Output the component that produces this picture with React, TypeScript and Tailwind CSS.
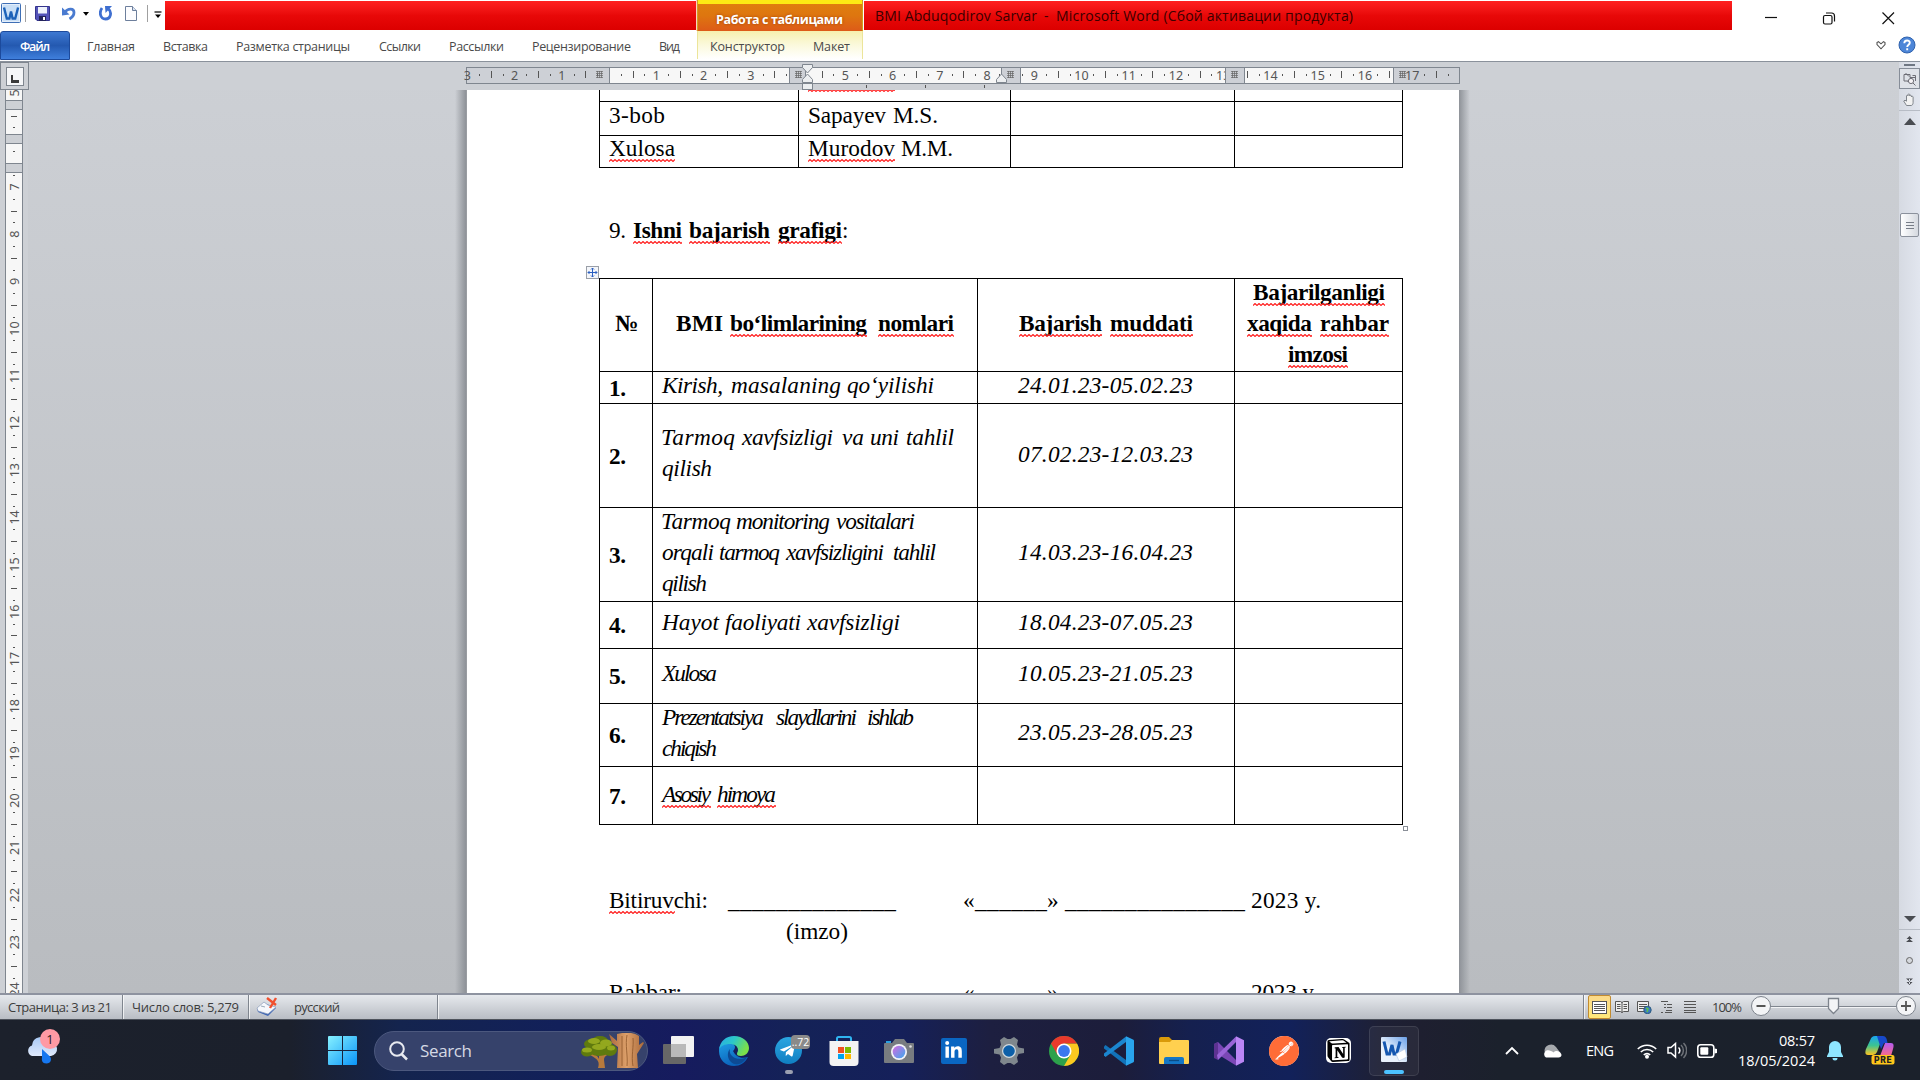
import React, { useLayoutEffect, useRef, useState } from "react";
import { FaLinkedinIn, FaTelegramPlane } from "react-icons/fa";
import { SiNotion, SiPostman } from "react-icons/si";

/* Text whose tracking is adjusted so that it spans a given width. */
function Fit({ text, w, className = "" }: { text: string; w: number; className?: string }) {
  const ref = useRef<HTMLSpanElement>(null);
  const [gap, setGap] = useState(0);
  useLayoutEffect(() => {
    if (!ref.current || text.length < 2) return;
    const natural = ref.current.getBoundingClientRect().width - gap * text.length;
    setGap((w - natural) / (text.length - 1));
  }, [text, w]);
  return (
    <span className={`block shrink-0 whitespace-pre ${className}`} style={{ width: w }}>
      <span ref={ref} style={{ letterSpacing: gap }}>
        {text}
      </span>
    </span>
  );
}

function Squiggle({ w }: { w: number }) {
  let d = "M0 2.5";
  for (let x = 2, up = true; x <= w + 1; x += 2, up = !up) d += `L${x} ${up ? 0.5 : 2.5}`;
  return (
    <svg className="absolute left-0 top-[26px]" width={w} height="3">
      <path d={d} fill="none" stroke="#ff2222" strokeWidth="1.150" />
    </svg>
  );
}

/* [text, left, right, misspelled?, light?] with coordinates along the page line */
type Word = [string, number, number, number?, number?];

function Line({ words, from, className = "" }: { words: Word[]; from: number; className?: string }) {
  return (
    <div className={`flex h-[31px] leading-[31px] ${className}`}>
      {words.map(([t, a, b, sq, light], i) => (
        <div key={i} className="relative shrink-0" style={{ marginLeft: a - (i ? words[i - 1][2] : from) }}>
          <Fit text={t} w={b - a} className={light ? "font-normal" : ""} />
          {sq ? <Squiggle w={b - a} /> : null}
        </div>
      ))}
    </div>
  );
}

type CellData = { top: number; lines: Word[][]; cls?: string };

const empty: CellData = { top: 0, lines: [] };
const cols = [599, 652, 977, 1234];
const num = (n: string, top: number): CellData => ({ top, cls: "font-bold", lines: [[[n, 609, 626]]] });
const date = (t: string, top: number): CellData => ({ top, cls: "italic", lines: [[[t, 1018, 1193]]] });
const it = (top: number, lines: Word[][]): CellData => ({ top, cls: "italic", lines });

const rows: { h: string; cells: CellData[] }[] = [
  {
    h: "h-[93px]",
    cells: [
      { top: 29, cls: "font-bold", lines: [[["№", 615, 638]]] },
      { top: 29, cls: "font-bold", lines: [[["BMI", 676, 723], ["bo‘limlarining", 730, 867, 1], ["nomlari", 878, 954, 1]]] },
      { top: 29, cls: "font-bold", lines: [[["Bajarish", 1019, 1102, 1], ["muddati", 1110, 1193, 1]]] },
      {
        top: -2,
        cls: "font-bold",
        lines: [[["Bajarilganligi", 1253, 1385, 1]], [["xaqida", 1247, 1312, 1], ["rahbar", 1320, 1389, 1]], [["imzosi", 1288, 1348, 1]]],
      },
    ],
  },
  {
    h: "h-[32px]",
    cells: [num("1.", 1), it(-2, [[["Kirish,", 662, 723], ["masalaning", 731, 841], ["qo‘yilishi", 847, 934]]]), date("24.01.23-05.02.23", -2), empty],
  },
  {
    h: "h-[104px]",
    cells: [
      num("2.", 37),
      it(18, [[["Tarmoq", 661, 735], ["xavfsizligi", 742, 833], ["va", 842, 864], ["uni", 870, 899], ["tahlil", 906, 954]], [["qilish", 662, 712]]]),
      date("07.02.23-12.03.23", 35),
      empty,
    ],
  },
  {
    h: "h-[94px]",
    cells: [
      num("3.", 32),
      it(-2, [
        [["Tarmoq", 661, 731], ["monitoring", 736, 830], ["vositalari", 836, 915]],
        [["orqali", 662, 714], ["tarmoq", 719, 780], ["xavfsizligini", 786, 884], ["tahlil", 893, 936]],
        [["qilish", 662, 707]],
      ]),
      date("14.03.23-16.04.23", 29),
      empty,
    ],
  },
  {
    h: "h-[47px]",
    cells: [num("4.", 8), it(5, [[["Hayot", 662, 719], ["faoliyati", 725, 801], ["xavfsizligi", 807, 900]]]), date("18.04.23-07.05.23", 5), empty],
  },
  { h: "h-[55px]", cells: [num("5.", 12), it(9, [[["Xulosa", 662, 717]]]), date("10.05.23-21.05.23", 9), empty] },
  {
    h: "h-[63px]",
    cells: [
      num("6.", 16),
      it(-2, [[["Prezentatsiya", 662, 764], ["slaydlarini", 776, 857], ["ishlab", 867, 914]], [["chiqish", 662, 717]]]),
      date("23.05.23-28.05.23", 13),
      empty,
    ],
  },
  { h: "h-[59px]", cells: [num("7.", 14), it(12, [[["Asosiy", 662, 711, 1], ["himoya", 717, 776, 1]]]), empty, empty] },
];

function DataCell({ c, x }: { c: CellData; x: number }) {
  return (
    <div className={`min-w-0 border-l border-t border-black ${c.cls ?? ""}`}>
      <div style={{ marginTop: c.top }} className="flex flex-col">
        {c.lines.map((l, i) => (
          <Line key={i} words={l} from={x + 1} />
        ))}
      </div>
    </div>
  );
}

const topCols = [599, 798, 1010, 1234];
const topRows: { h: string; top: number; a: Word[]; b: Word[] }[] = [
  { h: "h-[34px]", top: -2, a: [["3-bob", 609, 665]], b: [["Sapayev", 808, 886], ["M.S.", 893, 938]] },
  { h: "h-[33px] border-b", top: -3, a: [["Xulosa", 609, 675, 1]], b: [["Murodov", 808, 895, 1], ["M.M.", 901, 953]] },
];

function Page() {
  return (
    <div className="relative w-[992px] shrink-0 overflow-hidden bg-white text-[23.3px] text-black [font-family:'Liberation_Serif',serif]">
      <div className="ml-[132px] w-[804px]">
        <div className="grid h-[11px] grid-cols-[199px_212px_224px_169px] border-r border-black">
          {topCols.map((x) => (
            <div key={x} className="relative border-l border-black">
              {x === 798 && (
                <div className="absolute -top-[27px] left-[9px]">
                  <Squiggle w={87} />
                </div>
              )}
            </div>
          ))}
        </div>
        {topRows.map((r, i) => (
          <div key={i} className={`grid grid-cols-[199px_212px_224px_169px] border-r border-black ${r.h}`}>
            <DataCell x={599} c={{ top: r.top, lines: [r.a] }} />
            <DataCell x={798} c={{ top: r.top, lines: [r.b] }} />
            <DataCell x={1010} c={empty} />
            <DataCell x={1234} c={empty} />
          </div>
        ))}
        <Line
          className="mt-[47px] font-bold"
          from={599}
          words={[["9.", 609, 626, 0, 1], ["Ishni", 633, 682, 1], ["bajarish", 689, 770, 1], ["grafigi", 778, 842, 1], [":", 842, 850, 0, 1]]}
        />
        <div className="relative mt-[32px]">
          <svg className="absolute -left-[13px] -top-[12px]" width="13" height="13" viewBox="0 0 13 13">
            <rect x=".5" y=".5" width="12" height="12" fill="#f4f6fa" stroke="#9a9fa8" />
            <path d="M6.5 2v9M2 6.5h9M5 3.5l1.5-1.5L8 3.500M5 9.500L6.500 11 8 9.500M3.500 5L2 6.500 3.500 8M9.500 5L11 6.500 9.500 8" fill="none" stroke="#2b5fc0" />
          </svg>
          {rows.map((r, i) => (
            <div
              key={i}
              className={`grid grid-cols-[53px_325px_257px_169px] border-r border-black ${r.h} ${i === rows.length - 1 ? "border-b" : ""}`}
            >
              {r.cells.map((c, j) => (
                <DataCell key={j} x={cols[j]} c={c} />
              ))}
            </div>
          ))}
          <div className="absolute -bottom-[6px] -right-[5px] size-[5px] border border-[#8a8f98] bg-white" />
        </div>
        <div className="mt-[60px]">
          <div className="relative">
            <Line
              from={599}
              words={[
                ["Bitiruvchi:", 609, 708],
                ["______________", 728, 896],
                ["«", 963, 975],
                ["______", 975, 1047],
                ["»", 1047, 1059],
                ["_______________", 1065, 1245],
                ["2023 y.", 1251, 1321],
              ]}
            />
            <div className="absolute left-[10px] top-0">
              <Squiggle w={66} />
            </div>
          </div>
          <Line from={599} words={[["(imzo)", 786, 848]]} />
          <Line
            className="mt-[30px]"
            from={599}
            words={[["Rahbar:", 609, 682], ["«", 963, 976], ["»", 1047, 1059], ["2023 y.", 1251, 1318]]}
          />
        </div>
      </div>
    </div>
  );
}

function HRuler() {
  const t: React.ReactNode[] = [];
  const CM = 47.25;
  for (let q = -12; q <= 71; q++) {
    const x = 143 + (q * CM) / 4;
    const n = Math.abs(q / 4);
    const hidden = [[322, 348], [534, 553], [758, 777], [-9, -2], [927, 940]].some(([a, b]) => x > a && x < b);
    if (q % 4 === 0) {
      if (n !== 0 && n !== 4)
        t.push(
          <text key={q} x={x} y="17.500" textAnchor="middle" fontSize="12.500" fill="#555" fontFamily="'Noto Sans',sans-serif">
            {n}
          </text>,
        );
    } else if (!hidden && x > 4 && x < 990)
      t.push(
        q % 2 === 0 ? (
          <rect key={q} x={Math.round(x)} y="9" width="1" height="7" fill="#555" />
        ) : (
          <rect key={q} x={Math.round(x)} y="12" width="1" height="2" fill="#555" />
        ),
      );
  }
  const grid = (x: number) => (
    <path key={"g" + x} d={`M${x} 9.500h7M${x} 11.500h7M${x} 13.500h7M${x} 15.500h7M${x + 1.5} 9v7M${x + 3.5} 9v7M${x + 5.5} 9v7`} stroke="#666" strokeWidth=".7" />
  );
  return (
    <svg className="block overflow-visible" width="994" height="28" viewBox="0 0 994 28">
      <rect x=".5" y="5.500" width="993" height="16" fill="#cdd0d6" stroke="#7f868f" />
      <rect x="143" y="6" width="784" height="15" fill="#f7f7f7" />
      <path d="M143.500 5v16M927.500 5v16" stroke="#7f868f" />
      {t}
      {[[323, 16], [535, 19], [759, 19]].map(([x, w]) => (
        <rect key={x} x={x + 0.5} y="5.500" width={w} height="16" fill="#cdd0d6" stroke="#7f868f" />
      ))}
      {[130, 329, 541, 765, 933].map(grid)}
      <g stroke="#7f868f" fill="#eceef0">
        <path d="M336.500 2.500h10v3l-5 5.500-5-5.500z" />
        <path d="M336.500 20.500v-3l5-5.500 5 5.500v3z" />
        <rect x="336.500" y="21.500" width="10" height="6" />
        <path d="M530.500 20.500v-3l5-5.500 5 5.500v3z" />
      </g>
      <path d="M400.500 23v3M459.500 23v3M518.500 23v3" stroke="#555" />
    </svg>
  );
}

function VRuler() {
  const t: React.ReactNode[] = [];
  for (let q = 27; q <= 96; q++) {
    const y = 97 + ((q - 28) * 47.2) / 4;
    if (q % 4 === 0)
      t.push(
        <text key={q} transform={`translate(14 ${y}) rotate(-90)`} y="4.500" textAnchor="middle" fontSize="12.500" fill="#555" fontFamily="'Noto Sans',sans-serif">
          {q / 4}
        </text>,
      );
    else if (q % 2 === 0) t.push(<rect key={q} x="11" y={Math.round(y)} width="6" height="1" fill="#555" />);
    else t.push(<rect key={q} x="13" y={Math.round(y)} width="2" height="1" fill="#555" />);
  }
  return (
    <svg className="block w-[28px] shrink-0 bg-[#cdd0d5]" width="28" height="903" viewBox="0 0 28 903">
      <rect x="5.500" y="-2" width="17" height="910" fill="#f7f7f7" stroke="#7f868f" />
      <text transform="translate(14 3) rotate(-90)" y="4.500" textAnchor="middle" fontSize="12.500" fill="#555" fontFamily="'Noto Sans',sans-serif">
        5
      </text>
      {[10, 44, 73].map((y) => (
        <rect key={y} x="5.500" y={y + 0.5} width="17" height="9" fill="#cdd0d5" stroke="#7f868f" />
      ))}
      <path d="M11 26.500h6M13 37.500h2M13 61.500h2" stroke="#555" />
      {t}
    </svg>
  );
}

function WordGlyph() {
  return (
    <svg width="20" height="20" viewBox="0 0 20 20">
      <rect x=".5" y=".5" width="19" height="19" rx="1" fill="#e3eefb" stroke="#3f6fb5" />
      <rect x="2" y="2" width="16" height="16" fill="#c9dff6" />
      <path d="M3 4.500l2.800 11h2.600L10 8.500l1.600 7h2.600l2.900-11" fill="none" stroke="#1c62b9" strokeWidth="2.400" />
    </svg>
  );
}

function TitleBar() {
  return (
    <div className="flex h-[31px] bg-white">
      <div className="flex w-[165px] shrink-0 items-start pt-[3px] pl-px">
        <WordGlyph />
        <div className="ml-1 mt-0.5 h-[17px] w-px bg-[#a0a0a0]" />
        <svg className="ml-[9px] mt-[3px]" width="15" height="15" viewBox="0 0 15 15">
          <path d="M.5.500h14v14H2L.5 13z" fill="#5353b8" stroke="#34348c" />
          <rect x="3" y="1" width="9" height="6.500" fill="#eef2fb" />
          <rect x="4" y="10" width="7" height="5" fill="#23235c" />
          <rect x="8" y="11" width="2" height="3" fill="#fff" />
        </svg>
        <svg className="ml-[12px] mt-[3px]" width="14" height="15" viewBox="0 0 14 15">
          <path d="M3 6c3-4 9-4 9 .5 0 3-2 5-4.500 6.500" fill="none" stroke="#4a7bd0" strokeWidth="2.800" />
          <path d="M0 1.500v8l7.500-1z" fill="#4a7bd0" />
        </svg>
        <svg className="ml-[7px] mt-[9px]" width="6" height="4" viewBox="0 0 6 4">
          <path d="M0 0h6L3 3.800z" fill="#000" />
        </svg>
        <svg className="ml-[10px] mt-[2px]" width="14" height="16" viewBox="0 0 14 16">
          <path d="M3 3C0 7 1 14 6.500 14S13 7 9.500 4" fill="none" stroke="#3f6fd0" strokeWidth="2.800" />
          <path d="M6 1h7L6.500 8z" fill="#3f6fd0" />
        </svg>
        <svg className="ml-[12px] mt-[3px]" width="12" height="15" viewBox="0 0 12 15">
          <path d="M.5.500h7l4 4v10H.5z" fill="#fdfdff" stroke="#6d7f9c" />
          <path d="M7.500.500v4h4" fill="#dbe5f4" stroke="#6d7f9c" />
        </svg>
        <div className="ml-[10px] mt-0.5 h-[17px] w-px bg-[#a0a0a0]" />
        <svg className="ml-[6px] mt-[8px]" width="8" height="8" viewBox="0 0 8 8">
          <path d="M.5 1h7" stroke="#000" strokeWidth="1.200" />
          <path d="M1 3.500h6L4 7z" />
        </svg>
      </div>
      <div className="mt-px h-[29px] w-[531px] shrink-0 bg-gradient-to-b from-[#ff2020] via-[#e80808] to-[#dc0000]" />
      <div className="ml-px flex h-[31px] w-[166px] shrink-0 flex-col border-x border-[#d0a020] bg-gradient-to-b from-[#e0800e] via-[#de760f] to-[#dd5a18] shadow-[-1px_0_0_#ffd0c0]">
        <div className="h-[4px] shrink-0 bg-[#fdea14]" />
        <Fit text="Работа с таблицами" w={127} className="ml-[18px] mt-[6px] text-[12.500px] leading-[20px] font-bold text-white [text-shadow:0_0_3px_#a04000]" />
      </div>
      <div className="mt-px ml-px flex h-[29px] w-[868px] shrink-0 bg-gradient-to-b from-[#ff2020] via-[#e80808] to-[#dc0000] text-[14px] leading-[29px] text-[#3a0000]">
        <Fit text="BMI Abduqodirov Sarvar" w={162} className="ml-[11px]" />
        <span className="ml-[7px] w-[5px]">-</span>
        <Fit text="Microsoft Word (Сбой активации продукта)" w={297} className="ml-[7px]" />
      </div>
      <div className="flex grow items-start pl-[33px] pt-[11px]">
        <svg width="130" height="14" viewBox="0 0 130 14" fill="none" stroke="#111" strokeWidth="1.200">
          <path d="M0 6.500h12" />
          <rect x="58.500" y="4.500" width="8.500" height="8.500" rx="1.500" />
          <path d="M61 2h5.500a3 3 0 0 1 3 3v5.500" />
          <path d="M117.500 1.500l11.500 11.500M129 1.500L117.500 13" />
        </svg>
      </div>
    </div>
  );
}

const tabs: [string, number, number][] = [
  ["Главная", 87, 135],
  ["Вставка", 163, 208],
  ["Разметка страницы", 236, 350],
  ["Ссылки", 379, 421],
  ["Рассылки", 449, 504],
  ["Рецензирование", 532, 631],
  ["Вид", 659, 680],
];

function TabRow() {
  return (
    <div className="flex h-[31px] border-b border-[#8a919b] bg-white text-[12.500px] leading-[31px] text-[#4a4a4a]">
      <div className="h-[29px] w-[70px] shrink-0 rounded-t-[3px] border border-[#1c4a9c] bg-gradient-to-b from-[#3d78d2] via-[#2459b0] to-[#3f7fdc] text-white">
        <Fit text="Файл" w={30} className="ml-[19px] leading-[30px] font-semibold" />
      </div>
      {tabs.map(([t, a, b], i) => (
        <div key={t} className="shrink-0" style={{ marginLeft: a - (i ? tabs[i - 1][2] : 70) }}>
          <Fit text={t} w={b - a} />
        </div>
      ))}
      <div className="ml-[17px] flex h-[28px] w-[166px] shrink-0 border-x border-[#ece59a] bg-gradient-to-b from-[#f6f0ae] via-[#fbf9dc] to-white">
        <Fit text="Конструктор" w={75} className="ml-[12px]" />
        <Fit text="Макет" w={37} className="ml-[28px]" />
      </div>
      <div className="flex grow justify-end pr-[4px]">
        <svg className="mt-[10px]" width="10" height="9" viewBox="0 0 10 9" fill="none" stroke="#555" strokeWidth="1.100">
          <path d="M1 1.500l1.500-.8L5 2.800 7.500.700 9 1.500v2L5 7.800 1 3.500z" />
        </svg>
        <svg className="ml-[12px] mt-[5px]" width="18" height="18" viewBox="0 0 18 18">
          <circle cx="9" cy="9" r="8" fill="#4d86d8" stroke="#2f62ad" />
          <path d="M6.300 7.200c0-3.600 5.500-3.600 5.500-.4 0 2-2.600 2-2.600 4.200M9.200 12.300v1.900" fill="none" stroke="#fff" strokeWidth="1.900" />
        </svg>
      </div>
    </div>
  );
}

function ScrollBar() {
  return (
    <div className="flex w-[21px] shrink-0 flex-col items-center bg-gradient-to-r from-[#d6dae2] to-[#e2e6ef]">
      <div className="mt-[2px] h-[2px] w-[11px] bg-[#6f7783]" />
      <div className="mt-[2px] flex h-[21px] w-[21px] items-center justify-center border border-[#868d98] bg-[#dfe2e8]">
        <svg width="14" height="14" viewBox="0 0 14 14" fill="#f6f3f6" stroke="#6d6d75">
          <path d="M1 2.500h6v3h5.500V9M1 2.500V9h4M9.500 3.500h3V6M5 9v1" fill="none" />
          <circle cx="8" cy="9" r="2.600" />
          <path d="M10 11l2.500 2.500M2.500 1l3.500 3.500" />
        </svg>
      </div>
      <svg className="mt-[4px]" width="13" height="14" viewBox="0 0 13 14" fill="#f2f2f2" stroke="#80858c">
        <path d="M3.500 12.500L.7 8l1.300-.8 1.500 1V3c0-1 1.500-1 1.500 0V1.700c0-1 1.700-1 1.700 0V3c0-1 1.700-1 1.700 0v1c0-1 1.700-1 1.700 0v5.500c0 2-1 3-2 3z" />
      </svg>
      <div className="mt-[3px] h-px w-full bg-[#b7bcc5]" />
      <svg className="mt-[7px]" width="12" height="7">
        <path d="M6 0l6 7H0z" fill="#4a4d52" />
      </svg>
      <div className="mt-[88px] flex h-[24px] w-[19px] flex-col items-center justify-center gap-[2px] rounded-[2px] border border-[#8b919c] bg-gradient-to-r from-white to-[#d5d9e0]">
        <div className="h-px w-[8px] bg-[#777d88]" />
        <div className="h-px w-[8px] bg-[#777d88]" />
        <div className="h-px w-[8px] bg-[#777d88]" />
      </div>
      <svg className="mt-auto" width="12" height="6">
        <path d="M0 0h12L6 6z" fill="#4a4d52" />
      </svg>
      <div className="mt-[7px] h-px w-full bg-[#b7bcc5]" />
      <svg className="mb-[6px] mt-[5px]" width="9" height="52" viewBox="0 0 9 52" fill="#4a4d52">
        <path d="M4.500 1l3 3h-6zM4.500 4l3.500 3H1zM4 3h1v4H4zM4.500 50l3-3h-6zM4.500 46.500L8 43.500H1zM4 43h1v6H4z" />
        <circle cx="4.500" cy="25.500" r="3" fill="#d5d8dd" stroke="#666" />
      </svg>
    </div>
  );
}

function StatusBar() {
  const sep = "h-[24px] w-[2px] shrink-0 border-l border-[#7f858e] bg-white/70";
  return (
    <div className="flex h-[27px] items-center border-b border-t-2 border-b-[#4e535c] border-t-[#8e93a0] bg-gradient-to-b from-[#e6e9ed] to-[#b9bdc4] text-[13px] leading-[24px] text-[#3d3d3d]">
      <Fit text="Страница: 3 из 21" w={104} className="ml-[8px]" />
      <div className={`ml-[10px] ${sep}`} />
      <Fit text="Число слов: 5,279" w={107} className="ml-[8px]" />
      <div className={`ml-[9px] ${sep}`} />
      <svg className="ml-[6px]" width="22" height="20" viewBox="0 0 22 20">
        <path d="M1 12l7-6 5 2 7 3-8 8L2 15z" fill="#3f66b4" />
        <path d="M1 11l7-6 4 3 8 2-8 7-10-3z" fill="#f6f8fc" stroke="#8d9dbb" strokeWidth=".7" />
        <path d="M11 1l9 7M20 1l-6 10" stroke="#f0502f" strokeWidth="2.400" />
        <path d="M5 9l4 1" stroke="#9ab" />
      </svg>
      <Fit text="русский" w={46} className="ml-[16px]" />
      <div className={`ml-[97px] ${sep}`} />
      <div className={`ml-auto ${sep}`} />
      <div className="ml-[3px] flex h-[24px] w-[23px] shrink-0 items-center justify-center rounded-[2px] border border-[#c28b30] bg-gradient-to-b from-[#fbd98a] to-[#ffe97a]">
        <svg width="15" height="13" viewBox="0 0 15 13" fill="#fff" stroke="#555">
          <rect x=".5" y=".5" width="14" height="12" />
          <path d="M2 3.500h11M2 5.500h11M2 7.500h11M2 9.500h11" />
        </svg>
      </div>
      <svg className="ml-[4px] shrink-0" width="82" height="14" viewBox="0 0 82 14" fill="none" stroke="#555">
        <path d="M.5 1.500h5l1.500 1 1.500-1h5v10h-5L7 12.500l-1.500-1h-5zM7 2v11M2 4.500h3.500M2 6.500h3.500M2 8.500h3.500M8.500 4.500H12M8.500 6.500H12M8.500 8.500H12" fill="#eee" />
        <path d="M22.500 1.500h11v10h-11zM24 4.500h8M24 6.500h8M24 8.500h5" fill="#eee" />
        <circle cx="32.500" cy="10" r="3.700" fill="#3a78c0" stroke="#2b5a7f" />
        <path d="M31 8l2 1-1 3" stroke="#5dc04a" strokeWidth="1.500" />
        <path d="M46 1.500h7M49 4.500h2M52 4.500h5M49 7.500h2M52 7.500h5M46 12.500h2M51 10.500h6M50 12.500h7" />
        <path d="M69 1.500h12M69 4.500h12M69 7.500h12M69 10.500h12M69 12.500h12" />
      </svg>
      <Fit text="100%" w={30} className="ml-[15px]" />
      <svg className="ml-[8px] mr-[3px] shrink-0" width="167" height="24" viewBox="0 0 167 24">
        <path d="M20 11.500h126" stroke="#80868f" />
        <path d="M20 12.500h126" stroke="#f2f3f5" />
        <g fill="#f3f4f6" stroke="#7d838c">
          <circle cx="11" cy="11" r="9.500" />
          <circle cx="156" cy="11" r="9.500" />
          <path d="M78.500 3.500h10v10l-5 5-5-5z" strokeWidth="1.300" />
        </g>
        <path d="M6.500 11h9M151 11h10M156 6v10" stroke="#555" strokeWidth="1.800" />
      </svg>
    </div>
  );
}

function Slot({ children }: { children: React.ReactNode }) {
  return <div className="relative flex h-full w-[55px] shrink-0 items-center justify-center">{children}</div>;
}

function Taskbar() {
  return (
    <div className="h-[60px] overflow-hidden bg-[linear-gradient(90deg,#1c212c_0px,#1b202c_290px,#14244e_400px,#12205a_560px,#161b5e_680px,#142257_800px,#15205a_900px,#1d1f40_990px,#1c1d3a_1120px,#15204f_1190px,#12215a_1290px,#1e2035_1380px,#1e1f30_1420px,#1b212c_1500px,#1b212b_1920px)] pt-px">
      <div className="flex h-[59px] items-center">
        <div className="relative ml-[26px] h-[59px] w-[40px] shrink-0">
          <svg className="absolute left-0 top-[11px]" width="36" height="34" viewBox="0 0 36 34">
            <defs>
              <linearGradient id="wc" x1="0" y1="0" x2="0" y2="1">
                <stop offset="0" stopColor="#a9c9f5" />
                <stop offset="1" stopColor="#dfe9fb" />
              </linearGradient>
            </defs>
            <path d="M6 24a5.500 5.500 0 0 1 0-10.500A9 9 0 0 1 23 10a7 7 0 0 1 2 14z" fill="url(#wc)" />
            <path d="M16 17l8 7.500c2 2.500 1 7-3.500 7s-5-3.500-4.500-6z" fill="#1677f0" />
          </svg>
          <div className="absolute left-[14px] top-[8px] flex size-[20px] items-center justify-center rounded-full bg-[#ff99a4] text-[13px] leading-none text-[#2a1a1c]">1</div>
        </div>
        <svg className="ml-[262px] shrink-0" width="30" height="30" viewBox="0 0 30 30">
          <defs>
            <linearGradient id="win" x1="0" y1="0" x2="1" y2="1">
              <stop offset="0" stopColor="#86f1ff" />
              <stop offset="1" stopColor="#0a94f8" />
            </linearGradient>
          </defs>
          <path d="M0 1a1 1 0 0 1 1-1h13v14H0zM15 0h13a1 1 0 0 1 1 1v13H15zM0 15h14v14H1a1 1 0 0 1-1-1zM15 15h14v13a1 1 0 0 1-1 1H15z" fill="url(#win)" />
        </svg>
        <div className="ml-[16px] flex h-[40px] w-[274px] shrink-0 items-center rounded-full border border-[#4c587e] bg-[#36426b]">
          <svg className="ml-[14px]" width="19" height="20" viewBox="0 0 19 20" fill="none" stroke="#e8eaf0" strokeWidth="2">
            <circle cx="8" cy="8" r="6.800" />
            <path d="M12.500 13l5.500 5.500" strokeWidth="2.500" />
          </svg>
          <Fit text="Search" w={52} className="ml-[12px] text-[17px] text-[#d5d9e4]" />
          <svg className="ml-[109px]" width="64" height="36" viewBox="0 0 64 36">
            <defs>
              <linearGradient id="trunk">
                <stop offset="0" stopColor="#a8683c" />
                <stop offset=".5" stopColor="#dda06a" />
                <stop offset="1" stopColor="#a9693a" />
              </linearGradient>
            </defs>
            <path d="M18 22h4c0-3 5-4 9-6l1 3c-4 3-9 3-9 8l1 8h-7c2-6 0-9-8-13l1-2c4 1 7 3 8 6z" fill="#b77a3c" />
            <g fill="#5f7a0e">
              <ellipse cx="6" cy="19" rx="6" ry="4.500" />
              <ellipse cx="11" cy="11" rx="8" ry="5" />
              <ellipse cx="19" cy="8" rx="8" ry="5" />
              <ellipse cx="18" cy="17" rx="11" ry="6" />
              <ellipse cx="29" cy="17" rx="7" ry="6" />
            </g>
            <g fill="#93a81e">
              <ellipse cx="13" cy="8" rx="6" ry="3" />
              <ellipse cx="25" cy="10" rx="6" ry="3.500" />
              <ellipse cx="6" cy="17" rx="5" ry="2.500" />
              <ellipse cx="18" cy="14" rx="7" ry="3" />
              <ellipse cx="30" cy="15" rx="4" ry="2.500" />
            </g>
            <path d="M28 1l8 7V1c8-2 16-2 22 2v9l4-3 1 1-7 11 1 14H36l1-21-6-4z" fill="url(#trunk)" />
            <path d="M41 3v30M46 2c-2 10 1 20 0 31M52 5c1 8-2 18 0 28" stroke="#8d5529" strokeWidth=".8" fill="none" />
          </svg>
        </div>
        <div className="ml-[3px] flex h-[59px] shrink-0">
          <Slot>
            <svg width="31" height="29" viewBox="0 0 31 29">
              <rect x="0" y="8" width="23" height="20" rx="1" fill="#676767" />
              <rect x="8" y="0" width="23" height="21" rx="1" fill="#f2f2f2" />
              <path d="M8 8h15v13H8z" fill="#b9b9b9" />
            </svg>
          </Slot>
          <Slot>
            <svg width="30" height="30" viewBox="0 0 30 30">
              <defs>
                <linearGradient id="eg" x1="0" y1="0" x2="1" y2=".4">
                  <stop offset="0" stopColor="#2aa9e8" />
                  <stop offset=".5" stopColor="#2cc8c8" />
                  <stop offset="1" stopColor="#7be04a" />
                </linearGradient>
                <linearGradient id="eb" x1="0" y1="0" x2=".5" y2="1">
                  <stop offset="0" stopColor="#1fa0e6" />
                  <stop offset="1" stopColor="#0a5fb8" />
                </linearGradient>
              </defs>
              <path d="M0 15C0 6 7 5 12 7c6 2 4 6 2 8 3 6 8 8 15 6-3 6-8 9-14 9C7 30 0 24 0 15z" fill="url(#eb)" />
              <path d="M0 14C1 5 7 0 15 0c9 0 15 6 15 12 0 5-4 8-8 8-3 0-4-1-4-2 0-2 1-2 1-4 0-4-4-6-8-6C6 8 1 10 0 14z" fill="url(#eg)" />
              <path d="M11 13c-3 3-3 9 1 13 3 3 8 3 12 0 1-1 3-3 4-5-3 2-8 3-12 1-4-2-6-5-5-9z" fill="#0d4a94" />
            </svg>
          </Slot>
          <Slot>
            <div className="flex size-[27px] items-center justify-center rounded-full bg-gradient-to-b from-[#2ba6e1] to-[#0f7fc2]">
              <FaTelegramPlane className="mr-[2px] size-[17px] text-white" />
            </div>
            <div className="absolute left-[30px] top-[14px] flex h-[14px] w-[19px] items-center justify-center rounded-[4px] bg-[#8a8a8a] text-[10.500px] leading-none text-white">..72</div>
            <div className="absolute left-[24px] top-[49px] h-[4px] w-[8px] rounded-full bg-[#9a9fb0]" />
          </Slot>
          <Slot>
            <svg width="30" height="30" viewBox="0 0 30 30">
              <path d="M8 6V2.500A1.500 1.500 0 0 1 9.500 1h11A1.500 1.500 0 0 1 22 2.500V6" fill="none" stroke="#2fb4f0" strokeWidth="2" />
              <path d="M.5 5h29v21a4 4 0 0 1-4 4h-21a4 4 0 0 1-4-4z" fill="#f3f3f3" />
              <path d="M9 11h6v6H9z" fill="#f25022" />
              <path d="M16 11h6v6h-6z" fill="#7fba00" />
              <path d="M9 18h6v5H9z" fill="#00a4ef" />
              <path d="M16 18h6v5h-6z" fill="#ffb900" />
            </svg>
          </Slot>
          <Slot>
            <svg width="30" height="24" viewBox="0 0 30 24">
              <defs>
                <linearGradient id="cam" x1="0" y1="0" x2="1" y2="1">
                  <stop offset="0" stopColor="#d66ae0" />
                  <stop offset="1" stopColor="#3ca9ee" />
                </linearGradient>
              </defs>
              <rect x="2" y="2" width="5" height="4" fill="#2aa0e0" />
              <path d="M0 5a1 1 0 0 1 1-1h7l3-4h9l3 4h6a1 1 0 0 1 1 1v18a1 1 0 0 1-1 1H1a1 1 0 0 1-1-1z" fill="#787c80" />
              <circle cx="15" cy="13" r="8" fill="#f4f4f8" />
              <circle cx="15" cy="13" r="6.300" fill="url(#cam)" />
              <circle cx="26.500" cy="7.500" r="1.300" fill="#ddd" />
            </svg>
          </Slot>
          <Slot>
            <div className="flex size-[26px] items-center justify-center rounded-[2px] bg-[#0a66c2]">
              <FaLinkedinIn className="size-[19px] text-white" />
            </div>
          </Slot>
          <Slot>
            <svg width="30" height="28" viewBox="0 0 30 28">
              <path d="M10 0l3.500 2h3L20 0l4 3-1 4.500 1.500 3 5.500 1v4.500l-5.500 1L23 20.500l1 4.500-4 3-3.500-2h-3L10 28l-4-3 1-4.500-1.500-3L0 16.500V12l5.500-1L7 7.500 6 3z" fill="#7f878d" />
              <circle cx="15" cy="14" r="7" fill="#d3dbe0" />
              <circle cx="15" cy="14" r="5.800" fill="#0c5fa8" />
            </svg>
          </Slot>
          <Slot>
            <svg width="30" height="30" viewBox="0 0 30 30">
              <circle cx="15" cy="15" r="15" fill="#2ca14b" />
              <path d="M15 7.500h13A15 15 0 0 1 15 30l6.500-11.250z" fill="#fcc91f" />
              <path d="M2 7.500A15 15 0 0 1 28 7.500H15L8.500 18.750z" fill="#e8392c" />
              <circle cx="15" cy="15" r="7.500" fill="#fff" />
              <circle cx="15" cy="15" r="5.900" fill="#3a78ee" />
            </svg>
          </Slot>
          <Slot>
            <svg width="30" height="30" viewBox="0 0 30 30">
              <path d="M1.500 9L22 24v5.500L0 12.500v-2z" fill="#1272b8" />
              <path d="M1.500 21L22 6V.5L0 17.500v2z" fill="#1b86cf" />
              <path d="M22 .3L29 3.500a1.500 1.500 0 0 1 1 1.500v20a1.500 1.500 0 0 1-1 1.500L22 29.700V.3z" fill="#29a4ec" />
            </svg>
          </Slot>
          <Slot>
            <svg width="30" height="28" viewBox="0 0 30 28">
              <path d="M0 2a2 2 0 0 1 2-2h8l3 3v4H0z" fill="#d99a0a" />
              <path d="M0 5h11l2-2h16a1 1 0 0 1 1 1v22a1 1 0 0 1-1 1H1a1 1 0 0 1-1-1z" fill="#ffd04f" />
              <path d="M5 27v-5a2 2 0 0 1 2-2h16a2 2 0 0 1 2 2v5z" fill="#1476c6" />
              <path d="M10 23.500h10" stroke="#0a4c86" strokeWidth="1.300" />
            </svg>
          </Slot>
          <Slot>
            <svg width="30" height="30" viewBox="0 0 30 30">
              <path d="M0 8l4-2 18 18v5.500L5 19l-5 3z" fill="#7a47b5" />
              <path d="M0 8l4-2v18l-4-2z" fill="#5d3291" />
              <path d="M4 24L22 6V.5L3 19z" fill="#9a64d8" />
              <path d="M22 .3l8 4v21.400l-8 4z" fill="#bb86f5" />
            </svg>
          </Slot>
          <Slot>
            <div className="flex size-[30px] items-center justify-center rounded-full bg-white">
              <SiPostman className="size-[30px] text-[#ff6c37]" />
            </div>
          </Slot>
          <Slot>
            <div className="flex size-[25px] items-center justify-center rounded-[5px] bg-white">
              <SiNotion className="size-[23px] text-black" />
            </div>
          </Slot>
          <Slot>
            <div className="flex h-[50px] w-[50px] items-center justify-center rounded-[5px] border border-white/10 bg-white/5">
              <svg className="-mt-[2px]" width="28" height="28" viewBox="0 0 28 28">
                <defs>
                  <linearGradient id="wd" x1="1" y1="0" x2="0" y2="1">
                    <stop offset="0" stopColor="#6aa0e8" />
                    <stop offset=".6" stopColor="#eaf2fc" />
                  </linearGradient>
                </defs>
                <rect x="1" y="1" width="26" height="25" rx="1" fill="url(#wd)" />
                <path d="M4 5.500l3 12.500h2.500L12 9l2 9h2.500L20 5.500" fill="none" stroke="#1557b0" strokeWidth="3" />
                <path d="M16 18l9-5 2 8-8 4z" fill="#fff" stroke="#b6c7e2" strokeWidth=".6" />
              </svg>
            </div>
            <div className="absolute left-[18px] top-[49px] h-[4px] w-[20px] rounded-full bg-[#4cc2ff]" />
          </Slot>
        </div>
        <div className="ml-auto flex h-[59px] shrink-0 items-center text-white">
          <svg width="14" height="9" viewBox="0 0 14 9" fill="none" stroke="#fff" strokeWidth="1.800">
            <path d="M1 8l6-6 6 6" />
          </svg>
          <svg className="ml-[23px]" width="20" height="14" viewBox="0 0 20 14">
            <path d="M2.500 7.500A6.500 6.500 0 0 1 14 3l4.500 6-8 2z" fill="#a6a9ad" />
            <path d="M4 13.500a4 4 0 0 1 .5-7c3-.6 5 .5 7 2 1-1.500 4-2 6-.5 3 2 2.500 5.500-1 5.500z" fill="#fff" />
          </svg>
          <Fit text="ENG" w={28} className="ml-[24px] text-[14.500px] leading-[22px]" />
          <svg className="ml-[23px]" width="20" height="16" viewBox="0 0 20 16" fill="none" stroke="#fff" strokeWidth="1.600">
            <path d="M.8 6a13 13 0 0 1 18.400 0M3.800 9a8.800 8.800 0 0 1 12.400 0M6.800 12a4.500 4.500 0 0 1 6.400 0" />
            <circle cx="10" cy="13.800" r="1.200" fill="#fff" />
          </svg>
          <svg className="ml-[10px]" width="20" height="17" viewBox="0 0 20 17" fill="none" stroke="#fff" strokeWidth="1.500">
            <path d="M1 5.500h3l4.500-4v13.500l-4.500-4H1z" />
            <path d="M11.500 5.500a4 4 0 0 1 0 6" />
            <path d="M14 3a7.500 7.500 0 0 1 0 11M16.500 1a10.500 10.500 0 0 1 0 15" stroke="#6d7177" />
          </svg>
          <svg className="ml-[10px]" width="20" height="14" viewBox="0 0 20 14">
            <rect x=".8" y=".8" width="16" height="12.400" rx="2.800" fill="none" stroke="#fff" strokeWidth="1.600" />
            <rect x="3.300" y="3.300" width="8" height="7.400" rx="1" fill="#fff" />
            <path d="M17.500 4.500L20 5v4l-2.500.5z" fill="#fff" />
          </svg>
          <div className="ml-[21px] flex w-[77px] flex-col items-end text-[14.500px] leading-[20px]">
            <Fit text="08:57" w={36} />
            <Fit text="18/05/2024" w={77} />
          </div>
          <svg className="ml-[12px]" width="16" height="20" viewBox="0 0 16 20" fill="#8fe6ff">
            <path d="M8 0a6 6 0 0 1 6 6v5l2 4v1H0v-1l2-4V6a6 6 0 0 1 6-6zM5.500 17h5a2.500 2.500 0 0 1-5 0z" />
          </svg>
          <svg className="ml-[22px] mr-[25px]" width="30" height="29" viewBox="0 0 30 29">
            <defs>
              <linearGradient id="cp1" x1="0" y1="0" x2="0" y2="1">
                <stop offset="0" stopColor="#1aa5f0" />
                <stop offset=".5" stopColor="#3cc490" />
                <stop offset="1" stopColor="#ffc31f" />
              </linearGradient>
              <linearGradient id="cp2" x1="0" y1="0" x2="0" y2="1">
                <stop offset="0" stopColor="#b45cf0" />
                <stop offset="1" stopColor="#fb6a86" />
              </linearGradient>
            </defs>
            <path d="M5.500 3.500A5 5 0 0 1 10 0h8l-6 16a5 5 0 0 1-4 3H3c-3 0-3-3-2-6z" fill="url(#cp1)" />
            <path d="M12 0h6c3 0 4 3 4.500 7H19l-3 6z" fill="#1749c9" />
            <path d="M20 7h6c3 0 3 3 2 6l-2 7H15z" fill="url(#cp2)" />
            <rect x="6.500" y="19" width="23" height="9.500" rx="2" fill="#ffc61a" />
            <text x="18.200" y="27" textAnchor="middle" fontSize="8.500" fontWeight="800" letterSpacing=".7" fill="#222" fontFamily="Inter,sans-serif">
              PRE
            </text>
          </svg>
        </div>
      </div>
    </div>
  );
}

export default function App() {
  return (
    <div className="flex h-[1080px] w-[1920px] flex-col overflow-hidden [font-family:'Open_Sans','Noto_Sans',sans-serif]">
      <TitleBar />
      <TabRow />
      <div className="flex h-[931px] shrink-0 bg-gradient-to-b from-[#cdd0d5] to-[#b9bcc0]">
        <div className="flex min-w-0 grow flex-col">
          <div className="flex h-[28px] shrink-0 bg-[#cdd0d5]">
            <div className="flex h-[28px] w-[29px] shrink-0 items-center justify-center border border-[#7f868f] bg-[#cdd0d5]">
              <div className="h-[19px] w-[18px] border border-[#7f868f] bg-[#f5f6f8] pl-[4px] pt-[7px]">
                <div className="h-[8px] w-[8px] border-b-[3px] border-l-2 border-[#3a3a3a]" />
              </div>
            </div>
            <div className="ml-[437px]">
              <HRuler />
            </div>
          </div>
          <div className="flex h-[903px]">
            <VRuler />
            <div className="ml-[427px] w-[11px] shrink-0 bg-gradient-to-r from-transparent to-[#8e9298]" />
            <div className="w-px shrink-0 bg-[#9a9da2]" />
            <Page />
            <div className="w-[11px] shrink-0 bg-gradient-to-r from-[#8e9298] to-transparent" />
          </div>
        </div>
        <ScrollBar />
      </div>
      <StatusBar />
      <Taskbar />
    </div>
  );
}
